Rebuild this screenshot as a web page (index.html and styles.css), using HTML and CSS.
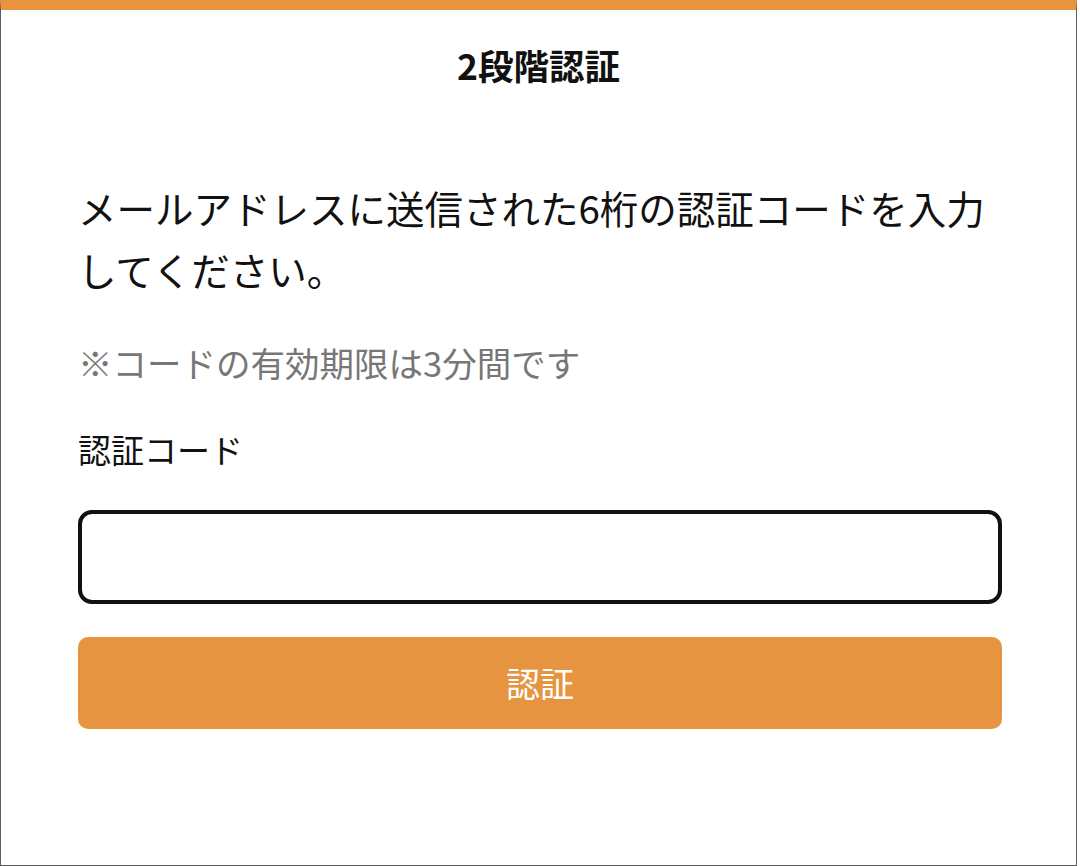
FILE: index.html
```html
<!DOCTYPE html>
<html lang="ja">
<head>
<meta charset="utf-8">
<title>2段階認証</title>
<link rel="stylesheet" href="styles.css">
</head>
<body>
<div class="page">
  <h1 class="title">2段階認証</h1>
  <main class="content">
    <p class="lead">メールアドレスに送信された6桁の認証コードを入力してください。</p>
    <p class="note">※コードの有効期限は3分間です</p>
    <label class="label" for="code">認証コード</label>
    <input class="input" id="code" type="text">
    <button class="button" type="button">認証</button>
  </main>
</div>
</body>
</html>
```
FILE: styles.css
```css
html, body {
  margin: 0;
  padding: 0;
  background: #ffffff;
}
body {
  font-family: "Noto Sans CJK JP", "Noto Sans", sans-serif;
  color: #111111;
}
.page {
  box-sizing: border-box;
  width: 1077px;
  height: 866px;
  border-top: 10px solid #e8943e;
  border-left: 1px solid #5e5e5e;
  border-right: 1px solid #5e5e5e;
  border-bottom: 1px solid #5e5e5e;
  display: flex;
  flex-direction: column;
}
.title {
  margin: 29px 0 0;
  font-size: 35.5px;
  line-height: 52px;
  font-weight: 700;
  text-align: center;
  color: #111111;
}
.content {
  display: flex;
  flex-direction: column;
  padding: 0 74px 0 77px;
}
.lead {
  margin: 85px 0 0;
  font-size: 38.5px;
  line-height: 62px;
  color: #111111;
}
.note {
  margin: 37px 0 0;
  font-size: 34.5px;
  line-height: 51px;
  color: #777777;
}
.label {
  margin-top: 37px;
  font-size: 33px;
  line-height: 48px;
  color: #111111;
}
.input {
  box-sizing: border-box;
  margin: 37px 0 0;
  width: 100%;
  height: 94px;
  border: 4px solid #111111;
  border-radius: 14px;
  background: #ffffff;
  font-size: 32px;
  padding: 0 20px;
  outline: none;
}
.button {
  box-sizing: border-box;
  margin-top: 33px;
  width: 100%;
  height: 92px;
  border: none;
  border-radius: 10px;
  background: #e6943f;
  color: #ffffff;
  font-family: "Noto Sans CJK JP", "Noto Sans", sans-serif;
  font-size: 34px;
  line-height: 92px;
  padding: 0;
}
```
